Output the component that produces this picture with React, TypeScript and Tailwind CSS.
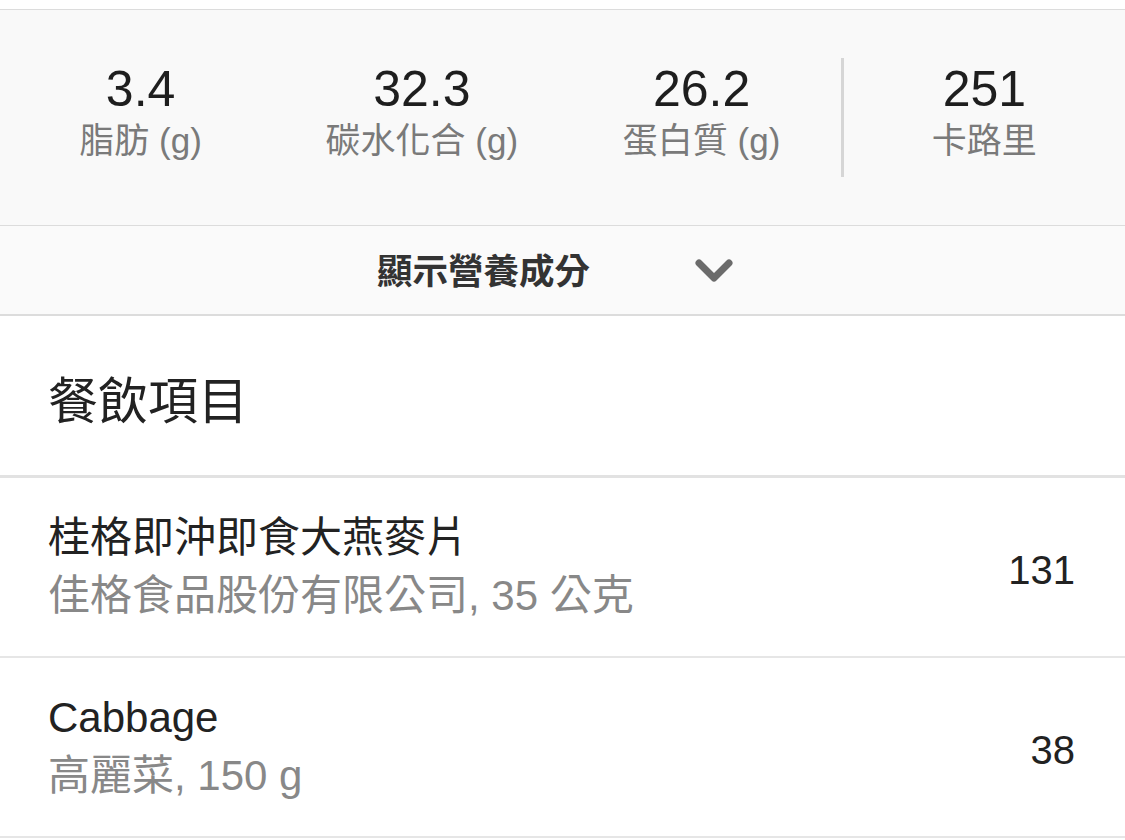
import React from "react";

const font = { fontFamily: '"Liberation Sans", "Noto Sans CJK TC", sans-serif' };

const stats = [
  { value: "3.4", label: "脂肪 (g)" },
  { value: "32.3", label: "碳水化合 (g)" },
  { value: "26.2", label: "蛋白質 (g)" },
  { value: "251", label: "卡路里" },
];

const items = [
  { name: "桂格即沖即食大燕麥片", detail: "佳格食品股份有限公司, 35 公克", cal: "131" },
  { name: "Cabbage", detail: "高麗菜, 150 g", cal: "38" },
];

const Stat = ({ value, label }: { value: string; label: string }) => (
  <div className="flex flex-col items-center mt-[-10px]">
    <div className="text-[50px] leading-[56px] text-[#1e1e1e]">{value}</div>
    <div className="text-[35px] leading-[48px] text-[#7a7a7a]">{label}</div>
  </div>
);

export default function App() {
  return (
    <div className="w-[1125px] h-[840px] overflow-hidden bg-white" style={font}>
      <div className="h-[9px] bg-white" />
      <div className="h-[217px] bg-[#f9f9f9] border-y border-[#dcdcdc] grid grid-cols-4 items-center">
        <Stat {...stats[0]} />
        <Stat {...stats[1]} />
        <div className="h-[119px] border-r-[3px] border-[#d6d6d6] flex items-center justify-center">
          <Stat {...stats[2]} />
        </div>
        <Stat {...stats[3]} />
      </div>
      <div className="h-[90px] bg-[#fafafa] border-b-2 border-[#dcdcdc] flex items-center pl-[377px]">
        <span className="text-[35.5px] leading-[44px] font-bold text-[#333] mt-[3px]">顯示營養成分</span>
        <svg className="ml-[104px] mt-[2px]" width="40" height="26" viewBox="0 0 40 26">
          <path d="M5 5 L20 20 L35 5" fill="none" stroke="#6b6b6b" strokeWidth="7" strokeLinecap="round" strokeLinejoin="round" />
        </svg>
      </div>
      <div className="h-[162px] flex items-center pl-[48px] border-b-[3px] border-[#e2e2e2]">
        <span className="text-[50px] leading-[60px] text-[#222] mt-[12px]">餐飲項目</span>
      </div>
      {items.map((it) => (
        <div key={it.name} className="h-[180px] flex items-center justify-between pl-[48px] pr-[50px] border-b-2 border-[#e6e6e6]">
          <div className="flex flex-col">
            <span className="text-[42px] leading-[58px] text-[#222]">{it.name}</span>
            <span className="text-[42px] leading-[58px] text-[#888]">{it.detail}</span>
          </div>
          <span className="text-[40px] text-[#222] mt-[6px]">{it.cal}</span>
        </div>
      ))}
    </div>
  );
}
